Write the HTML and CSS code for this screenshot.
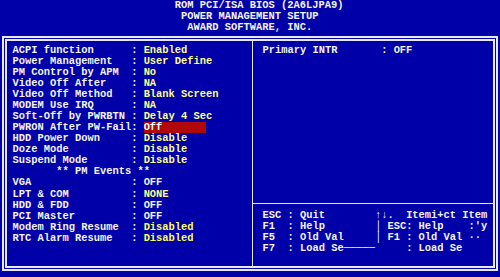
FILE: index.html
```html
<!DOCTYPE html>
<html lang="en">
<head>
    <meta charset="UTF-8">
    <title>Power Management Setup</title>
    <link rel="stylesheet" href="styles.css">
</head>
<body>

    <!-- Title lines -->
    <div class="header">
        <div class="line t1">ROM PCI/ISA BIOS (2A6LJPA9)</div>
        <div class="line t2">POWER MANAGEMENT SETUP</div>
        <div class="line t3">AWARD SOFTWARE, INC.</div>
    </div>

    <div class="frame">
        <div class="panel-left">
            <div class="row"><span class="label">ACPI function</span><span class="sep">:</span><span class="value">Enabled</span></div>
            <div class="row"><span class="label">Power Management</span><span class="sep">:</span><span class="value">User Define</span></div>
            <div class="row"><span class="label">PM Control by APM</span><span class="sep">:</span><span class="value">No</span></div>
            <div class="row"><span class="label">Video Off After</span><span class="sep">:</span><span class="value">NA</span></div>
            <div class="row"><span class="label">Video Off Method</span><span class="sep">:</span><span class="value">Blank Screen</span></div>
            <div class="row"><span class="label">MODEM Use IRQ</span><span class="sep">:</span><span class="value">NA</span></div>
            <div class="row"><span class="label">Soft-Off by PWRBTN</span><span class="sep">:</span><span class="value">Delay 4 Sec</span></div>
            <div class="row"><span class="label">PWRON After PW-Fail</span><span class="sep">:</span><span class="value selected">Off</span></div>
            <div class="row"><span class="label">HDD Power Down</span><span class="sep">:</span><span class="value">Disable</span></div>
            <div class="row"><span class="label">Doze Mode</span><span class="sep">:</span><span class="value">Disable</span></div>
            <div class="row"><span class="label">Suspend Mode</span><span class="sep">:</span><span class="value">Disable</span></div>
            <div class="row events">** PM Events **</div>
            <div class="row"><span class="label">VGA</span><span class="sep">:</span><span class="value plain">OFF</span></div>
            <div class="row"><span class="label">LPT &amp; COM</span><span class="sep">:</span><span class="value">NONE</span></div>
            <div class="row"><span class="label">HDD &amp; FDD</span><span class="sep">:</span><span class="value plain">OFF</span></div>
            <div class="row"><span class="label">PCI Master</span><span class="sep">:</span><span class="value plain">OFF</span></div>
            <div class="row"><span class="label">Modem Ring Resume</span><span class="sep">:</span><span class="value strong">Disabled</span></div>
            <div class="row"><span class="label">RTC Alarm Resume</span><span class="sep">:</span><span class="value strong">Disabled</span></div>
        </div>

        <div class="panel-right">
            <div class="right-top">
                <div class="row"><span class="label">Primary INTR</span><span class="sep">:</span><span class="value plain">OFF</span></div>
            </div>
            <!-- key help, garbled as on the real screen -->
            <div class="right-help">
                <div class="row">ESC : Quit        ↑↓.  Itemi+ct Item</div>
                <div class="row">F1  : Help        │ ESC: Help    :'y</div>
                <div class="row">F5  : Old Val     │ F1 : Old Val ··</div>
                <div class="row">F7  : Load Se─────     : Load Se</div>
            </div>
        </div>
    </div>

</body>
</html>
```

FILE: styles.css
```css
/* 80x25 text screen scaled to 500x277 */
* {
    margin: 0;
    padding: 0;
    box-sizing: border-box;
}

body {
    background-color: #0000a8;
    color: #f4f4f4;
    font-family: 'Liberation Mono', 'DejaVu Sans Mono', monospace;
    font-size: 10.4167px; /* 1ch = 6.25px */
    font-weight: bold;
    line-height: 11.08px;
    width: 500px;
    height: 277px;
    overflow: hidden;
}

.line,
.row {
    height: 11.08px;
    white-space: pre;
}

/* Header */
.t1 { padding-left: 28ch; }
.t2 { padding-left: 29ch; }
.t3 { padding-left: 30ch; }

/* Main double frame */
.frame {
    margin: 3px 0 0 2px;
    width: 496px;
    height: 235px;
    border: 5px double #e8e8f8;
    display: flex;
}

.panel-left {
    width: 246px;
    border-right: 1px solid #e8e8f8;
    padding: 3.3px 0 0 5.5px;
}

.panel-right {
    flex: 1;
    display: flex;
    flex-direction: column;
}

.right-top {
    height: 163px;
    border-bottom: 1px solid #e8e8f8;
    padding: 3.3px 0 0 9.5px;
}

.right-help {
    padding: 5.5px 0 0 9.5px;
}

/* Setting rows */
.label {
    display: inline-block;
    width: 19ch;
}

.sep {
    display: inline-block;
    width: 2ch;
}

.value {
    display: inline-block;
    color: #ffff8c;
}

.value.plain {
    color: #f4f4f4;
}

.value.strong {
    color: #ffff55;
}

.value.selected {
    width: 10ch;
    background-color: #b00808;
    color: #ffffff;
}

.events {
    padding-left: 7ch;
}
```
